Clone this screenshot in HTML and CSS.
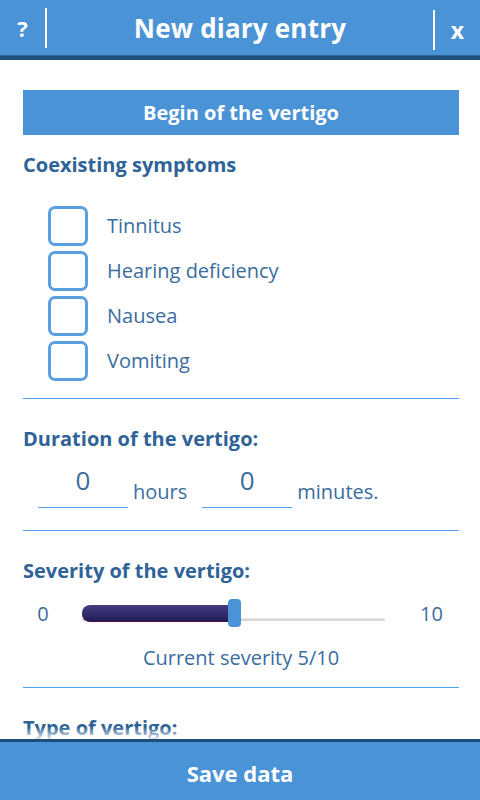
FILE: index.html
```html
<!DOCTYPE html>
<html lang="en">
<head>
    <meta charset="UTF-8">
    <meta name="viewport" content="width=device-width, initial-scale=1.0">
    <title>New diary entry</title>
    <link rel="stylesheet" href="styles.css">
</head>
<body>

    <header class="topbar">
        <span class="topbar-btn help">?</span>
        <h1 class="topbar-title">New diary entry</h1>
        <span class="topbar-btn close">x</span>
    </header>

    <main class="content">
        <div class="banner">Begin of the vertigo</div>

        <h2 class="section-title">Coexisting symptoms</h2>
        <ul class="symptoms">
            <li><span class="checkbox"></span>Tinnitus</li>
            <li><span class="checkbox"></span>Hearing deficiency</li>
            <li><span class="checkbox"></span>Nausea</li>
            <li><span class="checkbox"></span>Vomiting</li>
        </ul>

        <hr class="divider">

        <h2 class="section-title">Duration of the vertigo:</h2>
        <div class="duration">
            <span class="num-field">0</span>
            <span class="unit">hours</span>
            <span class="num-field">0</span>
            <span class="unit">minutes.</span>
        </div>

        <hr class="divider">

        <h2 class="section-title">Severity of the vertigo:</h2>
        <div class="slider-row">
            <span class="slider-min">0</span>
            <div class="slider">
                <div class="slider-fill" style="width: 50%"></div>
                <div class="slider-thumb"></div>
            </div>
            <span class="slider-max">10</span>
        </div>
        <p class="severity-text">Current severity 5/10</p>

        <hr class="divider">

        <h2 class="section-title">Type of vertigo:</h2>
    </main>

    <footer class="bottombar">
        Save data
    </footer>

</body>
</html>
```

FILE: styles.css
```css
body {
    margin: 0;
    height: 800px;
    display: flex;
    flex-direction: column;
    font-family: 'Open Sans', 'DejaVu Sans', sans-serif;
    background-color: #fff;
    overflow: hidden;
}

/* top bar */
.topbar {
    height: 56px;
    display: flex;
    align-items: center;
    background-color: #4a93d6;
    color: #fff;
    border-bottom: 4px solid #1f4e7a;
    box-shadow: inset 0 -1px 0 #2c6599;
    flex-shrink: 0;
}

.topbar-btn {
    width: 45px;
    height: 40px;
    line-height: 40px;
    text-align: center;
    font-size: 22px;
    font-weight: bold;
}

.help {
    border-right: 2px solid #fff;
}

.close {
    border-left: 2px solid #fff;
    margin-top: 4px;
    font-size: 23px;
}

.topbar-title {
    flex: 1;
    margin: 0;
    text-align: center;
    font-size: 26px;
    font-weight: bold;
    letter-spacing: 0.2px;
}

/* content */
.content {
    flex: 1;
    padding: 30px 21px 0 23px;
    position: relative;
    overflow: hidden;
}

.content::after {
    content: '';
    position: absolute;
    left: 0;
    right: 0;
    bottom: 0;
    height: 12px;
    background: linear-gradient(rgba(255, 255, 255, 0), rgba(255, 255, 255, 0.85));
}

.banner {
    height: 45px;
    line-height: 45px;
    background-color: #4a93d6;
    color: #fff;
    text-align: center;
    font-size: 20px;
    font-weight: bold;
}

.section-title {
    margin: 17px 0 0 0;
    color: #2f6398;
    font-size: 20px;
    font-weight: bold;
    line-height: 26px;
}

.divider + .section-title {
    margin-top: 27px;
}

.symptoms {
    list-style: none;
    margin: 25px 0 0 25px;
    padding: 0;
}

.symptoms li {
    display: flex;
    align-items: center;
    height: 45px;
    color: #3a6ca0;
    font-size: 20px;
}

.checkbox {
    width: 34px;
    height: 34px;
    border: 3px solid #5a9fe0;
    border-radius: 7px;
    margin-right: 19px;
}

.divider {
    border: none;
    border-top: 1px solid #4da3f2;
    margin: 15px 0 0 0;
}

/* duration */
.duration {
    display: flex;
    align-items: flex-end;
    margin: 11px 0 21px 15px;
    height: 46px;
    color: #3a6ca0;
}

.num-field {
    width: 90px;
    text-align: center;
    font-size: 26px;
    line-height: 34px;
    border-bottom: 1px solid #4da3f2;
    align-self: flex-start;
    height: 44px;
}

.unit {
    font-size: 20px;
    margin: 0 0 4px 5px;
}

.unit + .num-field {
    margin-left: 15px;
}

/* severity slider */
.slider-row {
    display: flex;
    align-items: center;
    height: 46px;
    margin-top: 6px;
    color: #3a6ca0;
    font-size: 20px;
}

.slider-min {
    width: 40px;
    text-align: center;
}

.slider {
    position: relative;
    margin-left: 19px;
    width: 303px;
    height: 17px;
}

.slider::before {
    content: '';
    position: absolute;
    left: 0;
    right: 0;
    top: 13px;
    height: 3px;
    background: linear-gradient(#e6e6e6, #cfcfcf);
    border-radius: 2px;
}

.slider-fill {
    position: relative;
    height: 17px;
    border-radius: 8px 0 0 8px;
    background: linear-gradient(#433f7e, #231a5a);
    border-bottom: 1px solid #4a1232;
    box-sizing: border-box;
}

.slider-thumb {
    position: absolute;
    left: 146px;
    top: -6px;
    width: 13px;
    height: 28px;
    border-radius: 4px;
    background-color: #4a93d6;
}

.slider-max {
    margin-left: 35px;
}

.severity-text {
    margin: 8px 0 0 0;
    text-align: center;
    color: #3a6ca0;
    font-size: 20px;
    line-height: 28px;
}

/* bottom bar */
.bottombar {
    height: 58px;
    line-height: 62px;
    flex-shrink: 0;
    background-color: #4a93d6;
    border-top: 3px solid #1f4e7a;
    color: #fff;
    text-align: center;
    font-size: 22px;
    font-weight: bold;
}
```
